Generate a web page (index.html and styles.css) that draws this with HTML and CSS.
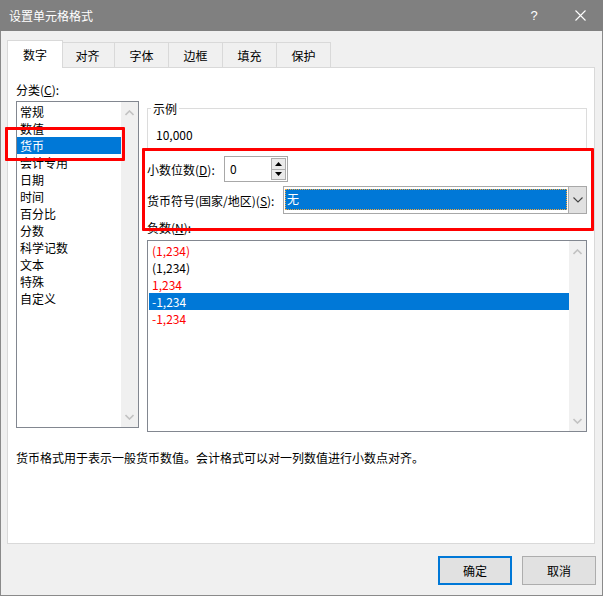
FILE: index.html
```html
<!DOCTYPE html>
<html lang="zh-CN">
<head>
  <meta charset="UTF-8" />
  <title>设置单元格格式</title>
  <link rel="stylesheet" href="styles.css">
</head>
<body>
  <div class="window">
    <div class="titlebar">
      <span class="title">设置单元格格式</span>
      <span class="caption-btn help">?</span>
      <span class="caption-btn">
        <svg width="11" height="11" viewBox="0 0 11 11"><path d="M0.5 0.5 L10.5 10.5 M10.5 0.5 L0.5 10.5" stroke="#fff" stroke-width="1.1" fill="none"/></svg>
      </span>
    </div>

    <div class="tabs">
      <div class="tab active">数字</div>
      <div class="tab">对齐</div>
      <div class="tab">字体</div>
      <div class="tab">边框</div>
      <div class="tab">填充</div>
      <div class="tab">保护</div>
    </div>

    <div class="panel">
      <div class="columns">
        <div class="col-left">
          <div class="label">分类(<u>C</u>):</div>
          <div class="listbox cat-list">
            <div class="items">
              <div class="item">常规</div>
              <div class="item">数值</div>
              <div class="item selected">货币</div>
              <div class="item">会计专用</div>
              <div class="item">日期</div>
              <div class="item">时间</div>
              <div class="item">百分比</div>
              <div class="item">分数</div>
              <div class="item">科学记数</div>
              <div class="item">文本</div>
              <div class="item">特殊</div>
              <div class="item">自定义</div>
            </div>
            <div class="scrollbar">
              <svg width="9" height="6" viewBox="0 0 9 6"><path d="M0.5 5 L4.5 1 L8.5 5" stroke="#c2c2c2" stroke-width="1.6" fill="none"/></svg>
              <svg width="9" height="6" viewBox="0 0 9 6"><path d="M0.5 1 L4.5 5 L8.5 1" stroke="#c2c2c2" stroke-width="1.6" fill="none"/></svg>
            </div>
          </div>
        </div>

        <div class="col-right">
          <fieldset class="sample">
            <legend>示例</legend>
            <div class="sample-value">10,000</div>
          </fieldset>

          <div class="field-row">
            <span class="field-label decimals">小数位数(<u>D</u>):</span>
            <div class="spinner">
              <span class="spinner-value">0</span>
              <div class="spin-buttons">
                <div class="spin-btn"><svg width="7" height="4" viewBox="0 0 7 4"><path d="M0 4 L3.5 0 L7 4 Z" fill="#000"/></svg></div>
                <div class="spin-btn"><svg width="7" height="4" viewBox="0 0 7 4"><path d="M0 0 L3.5 4 L7 0 Z" fill="#000"/></svg></div>
              </div>
            </div>
          </div>

          <div class="field-row symbol-row">
            <span class="field-label symbol">货币符号(国家/地区)(<u>S</u>):</span>
            <div class="select">
              <div class="select-value"><span>无</span></div>
              <div class="select-arrow">
                <svg width="10" height="6" viewBox="0 0 10 6"><path d="M0.5 0.5 L5 5 L9.5 0.5" stroke="#444" stroke-width="1.1" fill="none"/></svg>
              </div>
            </div>
          </div>

          <div class="label negative-label">负数(<u>N</u>):</div>
          <div class="listbox neg-list">
            <div class="items">
              <div class="item red">(1,234)</div>
              <div class="item">(1,234)</div>
              <div class="item red">1,234</div>
              <div class="item selected">-1,234</div>
              <div class="item red">-1,234</div>
            </div>
            <div class="scrollbar">
              <svg width="9" height="6" viewBox="0 0 9 6"><path d="M0.5 5 L4.5 1 L8.5 5" stroke="#c2c2c2" stroke-width="1.6" fill="none"/></svg>
              <svg width="9" height="6" viewBox="0 0 9 6"><path d="M0.5 1 L4.5 5 L8.5 1" stroke="#c2c2c2" stroke-width="1.6" fill="none"/></svg>
            </div>
          </div>
        </div>
      </div>

      <p class="desc">货币格式用于表示一般货币数值。会计格式可以对一列数值进行小数点对齐。</p>
    </div>

    <div class="buttons">
      <button class="btn default">确定</button>
      <button class="btn">取消</button>
    </div>

    <div class="mark mark-cat"></div>
    <div class="mark mark-fields"></div>
  </div>
</body>
</html>
```

FILE: styles.css
```css
* { box-sizing: border-box; }
body {
  margin: 0;
  font-family: "Noto Sans CJK SC", "Noto Sans", sans-serif;
  font-size: 12px;
  line-height: 17px;
  color: #000;
  background: #f0f0f0;
}
.window {
  position: relative;
  width: 603px;
  height: 596px;
  border: 1px solid #8a8a8a;
  border-top: none;
  background: #f0f0f0;
}
.titlebar {
  height: 31px;
  margin: 0 -1px;
  background: #808080;
  color: #fff;
  display: flex;
  align-items: center;
  padding-left: 9px;
}
.title {
  flex: 1;
}
.caption-btn {
  width: 46px;
  height: 31px;
  display: flex;
  align-items: center;
  justify-content: center;
}
.help {
  font-family: "Liberation Sans", sans-serif;
  font-size: 13px;
}

/* tabs */
.tabs {
  display: flex;
  align-items: flex-end;
  height: 27px;
  margin-top: 9px;
  padding-left: 6px;
}
.tab {
  width: 55px;
  height: 25px;
  margin-left: -1px;
  padding-top: 1px;
  border: 1px solid #d9d9d9;
  border-bottom: none;
  background: #f0f0f0;
  display: flex;
  align-items: center;
  justify-content: center;
}
.tab.active {
  position: relative;
  z-index: 1;
  width: 56px;
  height: 28px;
  margin-left: 0;
  margin-right: -2px;
  margin-bottom: -1px;
  padding-top: 0;
  background: #fff;
}

/* panel */
.panel {
  margin: 0 7px 0 6px;
  height: 477px;
  background: #fff;
  border: 1px solid #d9d9d9;
  padding: 13px 7px 0 8px;
}
.columns {
  display: grid;
  grid-template-columns: 123px 1fr;
  column-gap: 8px;
  align-items: start;
}
.label {
  height: 17px;
}
.listbox {
  display: flex;
  border: 1px solid #828790;
  background: #fff;
}
.cat-list {
  margin-top: 3px;
  height: 327px;
}
.items {
  flex: 1;
}
.item {
  height: 17px;
  padding-left: 3px;
  white-space: nowrap;
}
.item.selected {
  background: #0078d7;
  color: #fff;
}
.item.red {
  color: #ff0000;
}
.neg-list .items {
  padding: 1px 0 0 1px;
}
.cat-list .items {
  padding-top: 1px;
}
.scrollbar {
  width: 17px;
  background: #f0f0f0;
  display: flex;
  flex-direction: column;
  justify-content: space-between;
  align-items: center;
  padding: 8px 0 7px;
}

/* sample group */
.sample {
  margin: 19px 0 0;
  padding: 9px 8px 6px;
  border: 1px solid #dcdcdc;
  min-width: 0;
}
.sample legend {
  margin-left: -5px;
  padding: 0 2px;
  line-height: 17px;
}
.sample-value {
  height: 17px;
}

.field-row {
  display: flex;
  align-items: center;
  margin-top: 6px;
}
.field-label.decimals {
  width: 77px;
}
.field-label.symbol {
  width: 136px;
}
.spinner {
  display: flex;
  width: 64px;
  height: 26px;
  border: 1px solid #a8a8a8;
  padding: 1px 1px 1px 5px;
}
.spinner-value {
  flex: 1;
  line-height: 22px;
}
.spin-buttons {
  display: flex;
  flex-direction: column;
  width: 15px;
}
.spin-btn {
  flex: 1;
  border: 1px solid #adadad;
  background: #eaeaea;
  display: flex;
  align-items: center;
  justify-content: center;
}
.spin-btn + .spin-btn {
  border-top: none;
}
.symbol-row {
  margin-top: 4px;
}
.select {
  display: flex;
  width: 304px;
  height: 28px;
  border: 1px solid #a8a8a8;
}
.select-value {
  flex: 1;
  padding: 2px 1px 3px 1px;
}
.select-value span {
  display: block;
  height: 100%;
  background: #0078d7;
  color: #fff;
  border: 1px dotted #f2a63a;
  padding-left: 1px;
  line-height: 18px;
}
.select-arrow {
  width: 18px;
  background: #e1e1e1;
  border-left: 1px solid #adadad;
  display: flex;
  align-items: center;
  justify-content: center;
}
.negative-label {
  margin-top: 5px;
}
.neg-list {
  margin-top: 4px;
  height: 192px;
}
.neg-list .item {
  padding-left: 3px;
}

.desc {
  margin: 17px 0 0;
}

/* buttons */
.buttons {
  display: flex;
  justify-content: flex-end;
  gap: 10px;
  margin-top: 12px;
  padding-right: 6px;
}
.btn {
  width: 74px;
  height: 29px;
  font: inherit;
  color: #000;
  background: #e1e1e1;
  border: 1px solid #adadad;
  padding: 0;
}
.btn.default {
  border: 2px solid #0078d7;
}

/* red annotation boxes */
.mark {
  position: absolute;
  border: 3px solid #ff0000;
  border-radius: 1px;
}
.mark-cat {
  left: 4px;
  top: 127px;
  width: 120px;
  height: 34px;
}
.mark-fields {
  left: 141px;
  top: 148px;
  width: 452px;
  height: 83px;
}
```
